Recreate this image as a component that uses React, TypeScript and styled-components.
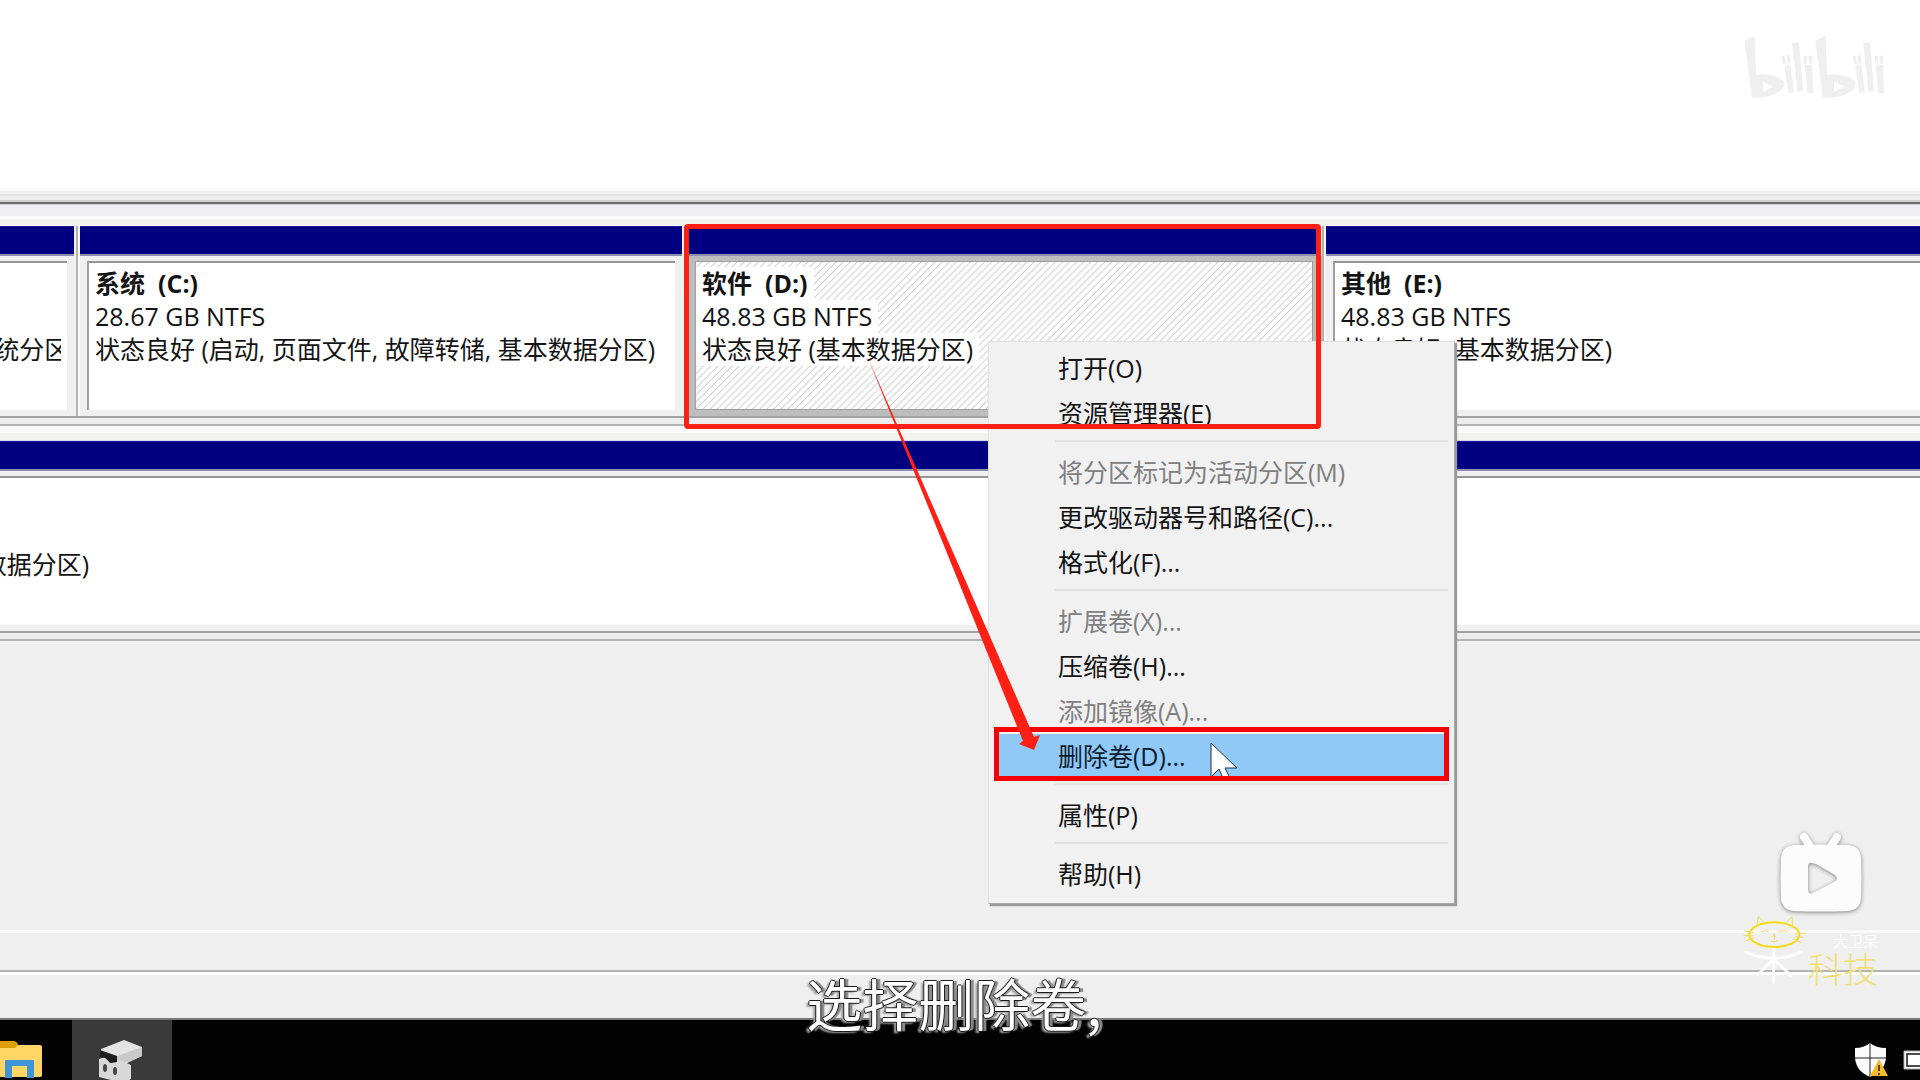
import React from "react";
import styled, { createGlobalStyle, css } from "styled-components";

const GlobalStyle = createGlobalStyle`
  *, *::before, *::after { box-sizing: border-box; }
  html, body { margin: 0; padding: 0; background: #efefef; }
  body {
    font-family: "Open Sans", "Noto Sans CJK SC", sans-serif;
    font-size: 25px;
    line-height: 33px;
    color: #141414;
  }
`;

const Screen = styled.main`
  position: relative;
  display: flex;
  flex-direction: column;
  min-height: 100vh;
  overflow: hidden;
  background: #efefef;
`;

const VolumeList = styled.section`
  flex: none;
  height: 187px;
  background: #fff;
`;

const Splitter = styled.div`
  flex: none;
  height: 39px;
  background: linear-gradient(
    #fafafa 0 4px, #f0f0f2 4px 7px, #e4e4e4 7px 9px, #efefef 9px 13px, #cfcfcf 13px 15px,
    #6e6e6e 15px 17px, #cfcfcf 17px 18px, #f0f0f2 18px 29px, #fafafa 29px 32px, #f2f2ee 32px 38px, #fafaff 38px
  );
`;

const DiskRow = styled.section`
  flex: none;
  display: flex;
  margin-right: -12px;
  border-bottom: 2px solid #a2a2a2;
`;

const RowGap = styled.div`
  flex: none;
  height: 23px;
  background: linear-gradient(#ededee 0 6px, #b4b4b4 6px 8px, #f9f9f9 8px 15px, #f2f2ee 15px 22px, #d5d5f5 22px);
`;

const Volume = styled.article<{ $width?: number; $pull?: number }>`
  ${(p) => (p.$width ? css`flex: none; width: ${p.$width}px;` : css`flex: 1; min-width: 0;`)}
  margin-left: ${(p) => (p.$pull ? -p.$pull : 0)}px;
  border-left: 2px solid #f8f8f8;
  border-right: 2px solid #b2b2b2;
  background: #f0f0f0;
`;

const Stripe = styled.div`
  height: 30px;
  margin-right: 2px;
  background: #000080;
  border-top: 1px solid #1c1c90;
  border-bottom: 2px solid #8e8eb0;
`;

const VolumeBody = styled.div<{ $selected?: boolean }>`
  padding: 5px 9px 6px 7px;
  background: ${(p) => (p.$selected ? "#bdbdbd" : "#f0f0f0")};
`;

const Panel = styled.div<{ $selected?: boolean }>`
  height: 149px;
  padding: 4px 6px;
  overflow: hidden;
  white-space: nowrap;
  background: #fff;
  border-top: 2px solid #969696;
  border-left: 2px solid #a0a0a0;
  ${(p) =>
    p.$selected &&
    css`
      padding: 5px 0;
      border: 1px solid #a0a0a0;
      background: repeating-linear-gradient(135deg, #fff 0 3px, #d2d2d2 4px, #fff 5px);
    `}
`;

const Line = styled.div<{ $bold?: boolean; $chip?: boolean }>`
  width: fit-content;
  max-width: 100%;
  min-height: 33px;
  overflow: hidden;
  font-weight: ${(p) => (p.$bold ? 700 : 400)};
  ${(p) => p.$chip && css`padding: 0 6px; background: #fff;`}
`;

const Workspace = styled.div`
  flex: 1;
  min-height: 200px;
  background: linear-gradient(#ededee 0 6px, #b4b4b4 6px 8px, #efefef 8px);
  border-bottom: 3px solid #fafafa;
`;

const StatusBar = styled.footer`
  flex: none;
  height: 87px;
  background: linear-gradient(#efefef 0 37px, #b4b4b4 37px 39px, #fff 39px 42px, #efefef 42px 85px, #7a7a7a 85px);
`;

const Taskbar = styled.nav`
  flex: none;
  display: flex;
  justify-content: space-between;
  height: 60px;
  background: #020202;
`;

const TaskGroup = styled.div`
  display: flex;
  overflow: hidden;
`;

const TaskButton = styled.button<{ $active?: boolean; $width: number }>`
  display: flex;
  align-items: flex-start;
  width: ${(p) => p.$width}px;
  height: 60px;
  padding: 0;
  border: 0;
  background: ${(p) => (p.$active ? "#3a3a3a" : "transparent")};
`;

const ContextMenu = styled.div`
  position: absolute;
  left: 988px;
  top: 341px;
  width: 467px;
  padding: 4px 6px 6px;
  background: #f1f1f2;
  border: 1px solid #e0e0e0;
  border-right-color: #a8a8a8;
  border-bottom-color: #a8a8a8;
  box-shadow: 2px 2px 1px #9a9a9a;
`;

const MenuItem = styled.button<{ $hot?: boolean }>`
  display: block;
  width: 100%;
  height: 45px;
  padding: 0 0 0 63px;
  border: 0;
  background: ${(p) => (p.$hot ? "#90c8f6" : "transparent")};
  color: ${(p) => (p.$hot ? "#0c1c30" : "#141414")};
  font: inherit;
  text-align: left;
  white-space: nowrap;
  &:disabled { color: #808080; }
`;

const Separator = styled.hr`
  height: 2px;
  margin: 4px 0 8px 60px;
  border: 0;
  background: #e3e3e3;
`;

const VolumeMark = styled.div`
  position: absolute;
  left: 684px;
  top: 224px;
  width: 637px;
  height: 205px;
  border: 5px solid #ff1f14;
  border-radius: 4px;
`;

const ItemMark = styled.div`
  position: absolute;
  left: 994px;
  top: 727px;
  width: 455px;
  height: 54px;
  border: 5px solid #f60000;
`;

const Overlay = styled.svg<{ $x: number; $y: number }>`
  position: absolute;
  left: ${(p) => p.$x}px;
  top: ${(p) => p.$y}px;
  overflow: hidden;
  pointer-events: none;
`;

const ChannelMark = styled.div`
  position: absolute;
  left: 1740px;
  top: 905px;
  display: flex;
  align-items: flex-start;
  font-family: "Noto Sans CJK SC", sans-serif;
  font-weight: 300;
`;

const ChannelName = styled.div`
  display: flex;
  flex-direction: column;
  align-items: flex-end;
  padding-top: 27px;
`;

const ChannelSmall = styled.span`
  font-size: 15px;
  line-height: 18px;
  color: #fff;
`;

const ChannelLarge = styled.span`
  font-size: 35px;
  line-height: 36px;
  color: #efe07a;
`;

const Subtitle = styled.p`
  position: absolute;
  left: 0;
  right: 0;
  bottom: 46px;
  margin: 0;
  padding-right: 12px;
  font-family: "Noto Sans CJK SC", sans-serif;
  font-size: 56px;
  font-weight: 400;
  line-height: 64px;
  text-align: center;
  color: #fff;
  text-shadow:
    1px 0 0 #1a1a1a, -1px 0 0 #1a1a1a, 0 1px 0 #1a1a1a, 0 -1px 0 #1a1a1a,
    4px 0 1px #8a8a8a, -3px 2px 2px #a0a0a0;
`;

type MenuEntry = { label: string; off?: boolean; hot?: boolean } | null;

const menuEntries: MenuEntry[] = [
  { label: "打开(O)" },
  { label: "资源管理器(E)" },
  null,
  { label: "将分区标记为活动分区(M)", off: true },
  { label: "更改驱动器号和路径(C)..." },
  { label: "格式化(F)..." },
  null,
  { label: "扩展卷(X)...", off: true },
  { label: "压缩卷(H)..." },
  { label: "添加镜像(A)...", off: true },
  { label: "删除卷(D)...", hot: true },
  null,
  { label: "属性(P)" },
  null,
  { label: "帮助(H)" },
];

type VolumeProps = {
  title: string;
  size: string;
  status: string;
  width?: number;
  pull?: number;
  selected?: boolean;
};

function VolumeCell({ title, size, status, width, pull, selected }: VolumeProps) {
  return (
    <Volume $width={width} $pull={pull}>
      <Stripe />
      <VolumeBody $selected={selected}>
        <Panel $selected={selected}>
          <Line $bold $chip={selected}>{title}</Line>
          <Line $chip={selected}>{size}</Line>
          <Line $chip={selected}>{status}</Line>
        </Panel>
      </VolumeBody>
    </Volume>
  );
}

function BiliHalf({ x }: { x: number }) {
  return (
    <g transform={`translate(${x} 0)`}>
      <path
        fillRule="evenodd"
        d="M1 23 L32 8 L36 125 Q72 120 98 132 Q122 143 122 152 Q118 176 80 188 Q56 196 24 194 Z M57 146 L57 178 L87 160 Z"
      />
      <path d="M113 69l9-1 4 24-9 1z M128 66l9-1 3 26-9 1z M121 98l18-3 11 83-17 2z M144 30l21-1 12 145-16 3z M180 69l9 0 1 23-9 0z M194 68l11 0 -2 24-8 0z M182 96l22 0 3 86-17-2z" />
    </g>
  );
}

export default function App() {
  return (
    <Screen>
      <GlobalStyle />
      <VolumeList />
      <Splitter />
      <DiskRow>
        <VolumeCell width={280} pull={202} title="" size="" status="状态良好 (EFI 系统分区)" />
        <VolumeCell width={608} title="系统&nbsp; (C:)" size="28.67 GB NTFS" status="状态良好 (启动, 页面文件, 故障转储, 基本数据分区)" />
        <VolumeCell width={638} selected title="软件&nbsp; (D:)" size="48.83 GB NTFS" status="状态良好 (基本数据分区)" />
        <VolumeCell title="其他&nbsp; (E:)" size="48.83 GB NTFS" status="状态良好 (基本数据分区)" />
      </DiskRow>
      <RowGap />
      <DiskRow>
        <VolumeCell pull={199} title="" size="" status="状态良好 (基本数据分区)" />
      </DiskRow>
      <Workspace />
      <StatusBar />
      <Taskbar>
        <TaskGroup>
          <TaskButton $width={72} aria-label="文件资源管理器">
            <svg width="72" height="60">
              <path d="M0 25h40q2 0 2 2v28q0 2-2 2H0z" fill="#ffd666" />
              <path d="M0 21h14q4 1 4 4l-3 3H0z" fill="#dba000" />
              <path d="M5 58V41q0-1 1-1h27q1 0 1 1v17h-7V46H12v12z" fill="#3d94d6" />
            </svg>
          </TaskButton>
          <TaskButton $width={100} $active aria-label="磁盘管理">
            <svg width="100" height="60">
              <path d="M29 29L52 20l18 7v9L53 44l-9-2-15-9z" fill="#e4e4e4" />
              <path d="M45 36l25-9v9L53 43l-8-1z" fill="#cacaca" />
              <path d="M27 39l6-2 5 6 8-4 13 6v14l-8 4-24-6z" fill="#d8d8d8" />
              <path d="M28 30l17 6 0 6-6 1-6-5-5-1z" fill="#1c1c1c" />
              <ellipse cx="33" cy="48" rx="2" ry="4" fill="#444" />
              <ellipse cx="43" cy="51" rx="2" ry="4" fill="#444" />
            </svg>
          </TaskButton>
        </TaskGroup>
        <TaskGroup>
          <TaskButton $width={48} aria-label="安全中心">
            <svg width="48" height="60">
              <path d="M0 28q9 0 15-5 6 5 16 5v8q0 15-16 21Q0 51 0 36z" fill="#fafafa" />
              <path d="M15 23v34M0 38h31" stroke="#222" strokeWidth="1" />
              <path d="M24 39l9 17H15z" fill="#f5b92c" />
              <path d="M24 45v6M24 53v2" stroke="#222" strokeWidth="1.5" />
            </svg>
          </TaskButton>
          <TaskButton $width={17} aria-label="显示">
            <svg width="17" height="60">
              <path d="M1 31h20v18H1z" fill="#fff" stroke="#aaa" strokeWidth="1" />
              <path d="M4 34h20v12H4z" fill="#fff" stroke="#111" strokeWidth="1.5" />
            </svg>
          </TaskButton>
        </TaskGroup>
      </Taskbar>

      <ContextMenu role="menu">
        {menuEntries.map((entry, i) =>
          entry ? (
            <MenuItem key={i} role="menuitem" disabled={entry.off} $hot={entry.hot}>
              {entry.label}
            </MenuItem>
          ) : (
            <Separator key={i} />
          )
        )}
      </ContextMenu>

      <Overlay $x={1205} $y={738} width="40" height="38">
        <path d="M6 5v34l8-8 6 14 6-3-6-12h12z" fill="#fff" stroke="#1c3048" strokeWidth="1" />
      </Overlay>
      <VolumeMark />
      <ItemMark />
      <Overlay $x={860} $y={350} width="190" height="410">
        <path d="M8 8L174 387l6-2-6 15-15-6 4-3L8 8z" fill="#ff1f14" />
      </Overlay>

      <Overlay $x={1744} $y={33} width="146" height="68" viewBox="0 0 438 204" fill="#efefef" aria-label="bilibili">
        <BiliHalf x={0} />
        <BiliHalf x={213} />
      </Overlay>

      <Overlay $x={1770} $y={824} width="104" height="98">
        <g style={{ filter: "drop-shadow(0 1px 2px rgba(0,0,0,0.45))" }}>
          <path d="M34 13l7 11M67 13l-7 11" stroke="#fcfcfc" strokeWidth="8" strokeLinecap="round" />
          <path
            fillRule="evenodd"
            fill="#fcfcfc"
            d="M24 21Q51 20 78 21Q90 22 91 34Q92 54 91 74Q90 86 78 87Q51 88 24 87Q12 86 11 74Q10 54 11 34Q12 22 24 21z M42 39Q38 38 38 43V65Q38 71 43 69L64 58Q69 55 65 51L46 40z"
          />
        </g>
      </Overlay>

      <ChannelMark>
        <svg width="68" height="90" viewBox="0 0 204 270" fill="none" strokeLinecap="round">
          <g stroke="#ffffff" strokeWidth="8">
            <path d="M101 130v103M16 141Q100 178 184 141M101 162L54 209M101 162L153 212" />
          </g>
          <ellipse cx="103" cy="89" rx="75" ry="37" stroke="#f7dc10" strokeWidth="6" />
          <g stroke="#f1de5c" strokeWidth="3">
            <path d="M50 66l5-32 21 22M134 56l22-20 2 32M14 78l26 4M12 92h26M18 107l24-8M198 84l-32 3M190 97l-24-2M182 112l-22-10M64 80q10-8 22 0M118 80q12-8 26 0M103 88v16M96 96q6-10 12 0M92 108q10 6 20 0" />
          </g>
        </svg>
        <ChannelName>
          <ChannelSmall>大卫呆</ChannelSmall>
          <ChannelLarge>科技</ChannelLarge>
        </ChannelName>
      </ChannelMark>

      <Subtitle>选择删除卷,</Subtitle>
    </Screen>
  );
}
